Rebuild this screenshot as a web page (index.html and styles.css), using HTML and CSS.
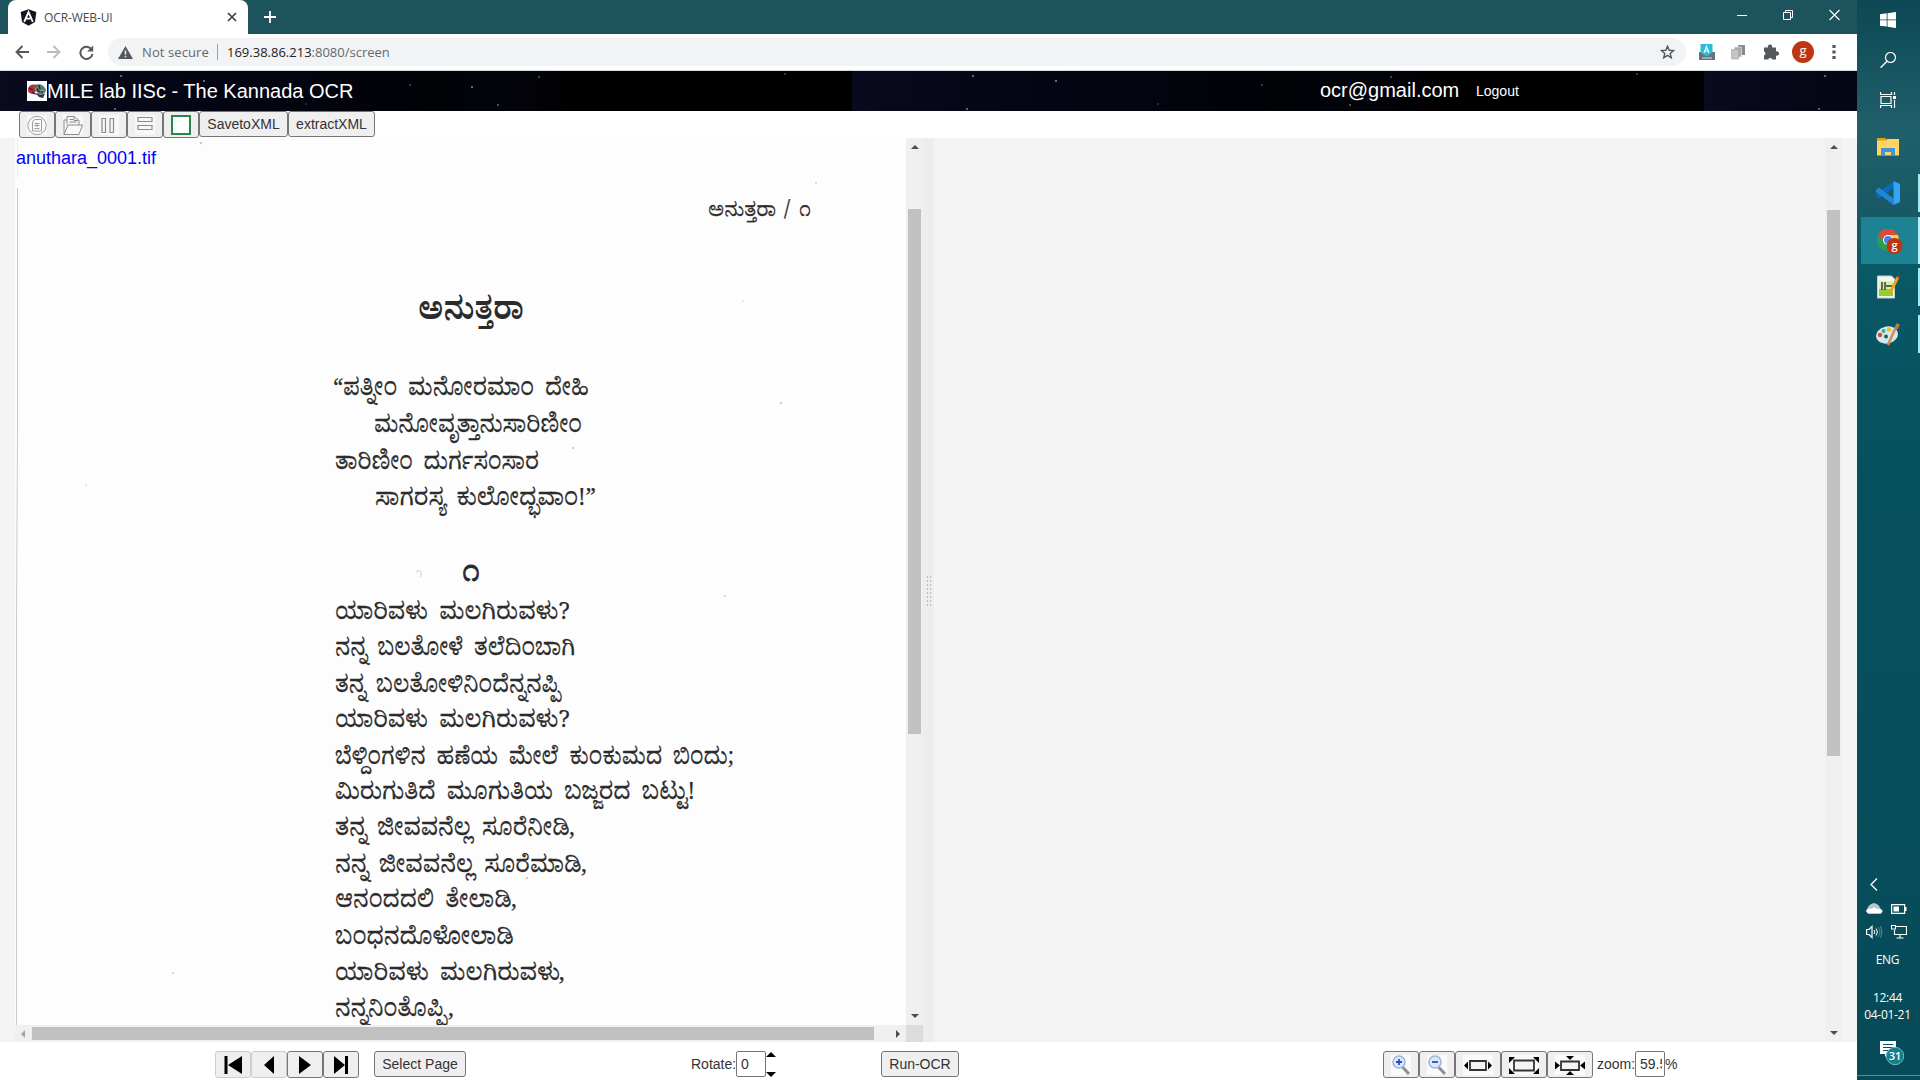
FILE: index.html
```html
<!DOCTYPE html>
<html lang="en">
<head>
<meta charset="utf-8">
<title>OCR-WEB-UI</title>
<link rel="stylesheet" href="styles.css">
</head>
<body>
<main class="browser">
  <div class="tabstrip">
    <div class="tab">
      <svg width="17" height="17" viewBox="0 0 17 17"><path d="M8.500.2 16.300 3 15 13 8.500 16.800 2 13 .7 3z" fill="#10151f"/><path d="M4.200 12.800 8.500 3l4.300 9.800M5.800 9.600h5.400" fill="none" stroke="#fff" stroke-width="1.900"/></svg>
      <span class="tab-title">OCR-WEB-UI</span>
      <svg width="10" height="10" viewBox="0 0 10 10"><path d="M1 1l8 8M9 1 1 9" stroke="#3c4043" stroke-width="1.700"/></svg>
    </div>
    <svg class="newtab" width="12" height="12" viewBox="0 0 12 12"><path d="M6 0v12M0 6h12" stroke="#fff" stroke-width="1.800"/></svg>
    <div class="winctl">
      <svg width="10" height="12" viewBox="0 0 10 12"><path d="M0 6.500h10" stroke="#fff"/></svg>
      <svg width="10" height="12" viewBox="0 0 10 12"><path d="M.5 3.500h7v7h-7zM2.500 3V1.500h7v7H8" fill="none" stroke="#fff"/></svg>
      <svg width="11" height="12" viewBox="0 0 11 12"><path d="M.5 1l10 10M10.500 1l-10 10" stroke="#fff" stroke-width="1.100"/></svg>
    </div>
  </div>
  <div class="navbar">
    <div class="nav-icons">
      <svg width="14" height="14" viewBox="0 0 14 14"><path d="M14 7H1.500M7.500 1l-6 6 6 6" fill="none" stroke="#54585c" stroke-width="1.900"/></svg>
      <svg width="14" height="14" viewBox="0 0 14 14"><path d="M0 7h12.500M6.500 1l6 6-6 6" fill="none" stroke="#b9bbbd" stroke-width="1.900"/></svg>
      <svg width="15" height="15" viewBox="0 0 15 15"><path d="M12.600 4.500A6.100 6.100 0 1 0 13.500 8.800" fill="none" stroke="#54585c" stroke-width="2"/><path d="M14.200.4v6h-6z" fill="#54585c"/></svg>
    </div>
    <div class="omnibox">
      <svg width="15" height="13" viewBox="0 0 15 13"><path d="M7.500 0 15 13H0z" fill="#54585c"/><path d="M7.500 4.500v4M7.500 9.800v1.500" stroke="#f1f3f4" stroke-width="1.500"/></svg>
      <span class="insecure">Not secure</span>
      <span class="url"><b>169.38.86.213</b>:8080/screen</span>
      <svg class="star" width="15" height="14" viewBox="0 0 15 14"><path d="M7.500 1.200 9.200 5.300l4.400.3-3.400 2.900 1.100 4.300-3.800-2.400-3.800 2.400 1.100-4.300L1.400 5.600l4.400-.3z" fill="none" stroke="#54585c" stroke-width="1.400"/></svg>
    </div>
    <div class="extensions">
      <svg width="16" height="16" viewBox="0 0 16 16"><path d="M0 8h16v8H0z" fill="#65737b"/><path d="M1.500 0h12v8.500L7.500 12.500l-6-4z" fill="#25bfd9"/><path d="M5 9 7.500 2.500 10 9M6 7h3" fill="none" stroke="#fff" stroke-width="1.200"/><path d="M3 14h10" stroke="#ddd"/></svg>
      <svg width="16" height="16" viewBox="0 0 16 16"><path d="M7 1h7v10H7z" fill="#8a8a8a"/><path d="M3.500 3h7v10h-7z" fill="#aaa" stroke="#eee" stroke-width=".6"/><path d="M.5 5.500h7v9.500h-7z" fill="#c4c4c4" stroke="#aaa" stroke-width=".7"/></svg>
      <svg width="16" height="16" viewBox="0 0 16 16"><path d="M1 3.500h4a2.200 2.200 0 1 1 4 0h4v4a2.200 2.200 0 1 1 0 4v4H9.200a2.100 2.100 0 0 0-4 0H1v-4a2.100 2.100 0 0 0 0-4z" fill="#54585c"/></svg>
      <span class="avatar">g</span>
      <svg width="4" height="14" viewBox="0 0 4 14"><path d="M2 0v14" stroke="#54585c" stroke-width="3.200" stroke-dasharray="3 2.500"/></svg>
    </div>
  </div>

  <header class="apphead">
    <svg width="20" height="20" viewBox="0 0 20 20"><path d="M0 0h20v20H0z" fill="#fff"/><path d="M1 9Q1 3 8 3.500L10 8l-3 5Q1 13 1 9z" fill="#b52f38"/><path d="M7 4q9-3 12 5-1 5-7 4L8 9z" fill="#4f7d78"/><path d="M9 12.500q5 2 9 0l-2 4.500-4-1z" fill="#27324d"/><path d="M2 7l4 2M9 5l2 5 5 1M5 11l3 2 4 0M12 4l1 4" stroke="#3a1c30" fill="none" stroke-width="1.200"/><path d="M8 9l2-3M13 10l4-1" stroke="#d7a83e"/></svg>
    <h1>MILE lab IISc - The Kannada OCR</h1>
    <span class="email">ocr@gmail.com</span>
    <a class="logout">Logout</a>
  </header>

  <div class="toolbar">
    <button class="ic dis"><svg width="20" height="20" viewBox="0 0 20 20"><path d="M0 0h20v20H0z" fill="#f8f8f8"/><g fill="none" stroke="#a0a0a0"><circle cx="10" cy="10.500" r="9.200"/><path d="M5.500 6.500 8 4.500h6.500v11.500h-9zM7.500 8.500h5M7.500 10.500h5M10 9v3M7.500 13.500h5"/></g></svg></button>
    <button class="ic dis"><svg width="20" height="20" viewBox="0 0 20 20"><path d="M0 0h20v20H0z" fill="#f8f8f8"/><g fill="none" stroke="#8c8c8c"><path d="M1 19.500V5h3M1 19.500 5 10h14.500L16 19.500zM4 9.500V1.500h7l5 4v4.500M6.500 4.500h4M6.500 7h7M11 1.500v4h4.500"/></g></svg></button>
    <button class="ic dis"><svg width="20" height="20" viewBox="0 0 20 20"><path d="M0 0h20v20H0z" fill="#f8f8f8"/><path d="M3 3.500h3.500v14H3zM11 3.500h3.500v14H11z" fill="none" stroke="#8c8c8c" stroke-width="1.200"/></svg></button>
    <button class="ic dis"><svg width="20" height="20" viewBox="0 0 20 20"><path d="M0 0h20v20H0z" fill="#f8f8f8"/><path d="M3 2.500h14v4H3zM3 10.500h14v4H3z" fill="none" stroke="#8c8c8c" stroke-width="1.200"/></svg></button>
    <button class="ic"><svg width="20" height="20" viewBox="0 0 20 20"><path d="M1 1h18v18H1z" fill="#fff" stroke="#27884a" stroke-width="2"/></svg></button>
    <button class="save">SavetoXML</button>
    <button class="extract">extractXML</button>
  </div>

  <div class="panes">
    <section class="scan-pane">
      <div class="scan-row">
        <svg class="scan" width="891" height="887" viewBox="15 138 891 887">
          <path d="M17.500 138v40" stroke="#eee"/>
          <path d="M17.500 188V430L16.500 620V1025" stroke="#c9c9c9" fill="none"/>
          <text x="16" y="164" class="fname">anuthara_0001.tif</text>
          <g class="kn">
            <text x="708" y="216" font-size="19" textLength="68" lengthAdjust="spacingAndGlyphs">ಅನುತ್ತರಾ</text>
            <text x="784" y="216" font-size="21">/</text>
            <text x="799" y="216" font-size="20" textLength="12" lengthAdjust="spacingAndGlyphs">೧</text>
            <text class="title" x="418" y="319" font-size="31" textLength="106" lengthAdjust="spacingAndGlyphs">ಅನುತ್ತರಾ</text>
            <text x="333" y="395" textLength="256" lengthAdjust="spacingAndGlyphs">“ಪತ್ನೀಂ ಮನೋರಮಾಂ ದೇಹಿ</text>
            <text x="374" y="432" textLength="208" lengthAdjust="spacingAndGlyphs">ಮನೋವೃತ್ತಾನುಸಾರಿಣೀಂ</text>
            <text x="335" y="469" textLength="204" lengthAdjust="spacingAndGlyphs">ತಾರಿಣೀಂ ದುರ್ಗಸಂಸಾರ</text>
            <text x="375" y="505" textLength="221" lengthAdjust="spacingAndGlyphs">ಸಾಗರಸ್ಯ ಕುಲೋದ್ಭವಾಂ!”</text>
            <text x="462" y="581" font-size="28" textLength="18" lengthAdjust="spacingAndGlyphs" stroke-width=".8">೧</text>
            <text x="335" y="619" textLength="235" lengthAdjust="spacingAndGlyphs">ಯಾರಿವಳು ಮಲಗಿರುವಳು?</text>
            <text x="335" y="655" textLength="240" lengthAdjust="spacingAndGlyphs">ನನ್ನ ಬಲತೋಳೆ ತಲೆದಿಂಬಾಗಿ</text>
            <text x="335" y="692" textLength="224" lengthAdjust="spacingAndGlyphs">ತನ್ನ ಬಲತೋಳಿನಿಂದೆನ್ನನಪ್ಪಿ</text>
            <text x="335" y="727" textLength="235" lengthAdjust="spacingAndGlyphs">ಯಾರಿವಳು ಮಲಗಿರುವಳು?</text>
            <text x="335" y="764" textLength="399" lengthAdjust="spacingAndGlyphs">ಬೆಳ್ದಿಂಗಳಿನ ಹಣೆಯ ಮೇಲೆ ಕುಂಕುಮದ ಬಿಂದು;</text>
            <text x="335" y="799" textLength="360" lengthAdjust="spacingAndGlyphs">ಮಿರುಗುತಿದೆ ಮೂಗುತಿಯ ಬಜ್ಜರದ ಬಟ್ಟು!</text>
            <text x="335" y="835" textLength="240" lengthAdjust="spacingAndGlyphs">ತನ್ನ ಜೀವವನೆಲ್ಲ ಸೂರೆನೀಡಿ,</text>
            <text x="335" y="872" textLength="252" lengthAdjust="spacingAndGlyphs">ನನ್ನ ಜೀವವನೆಲ್ಲ ಸೂರೆಮಾಡಿ,</text>
            <text x="335" y="907" textLength="182" lengthAdjust="spacingAndGlyphs">ಆನಂದದಲಿ ತೇಲಾಡಿ,</text>
            <text x="335" y="944" textLength="179" lengthAdjust="spacingAndGlyphs">ಬಂಧನದೊಳೋಲಾಡಿ</text>
            <text x="335" y="980" textLength="230" lengthAdjust="spacingAndGlyphs">ಯಾರಿವಳು ಮಲಗಿರುವಳು,</text>
            <text x="335" y="1016" textLength="119" lengthAdjust="spacingAndGlyphs">ನನ್ನನಿಂತೊಪ್ಪಿ,</text>
          </g>
          <g fill="#ccc"><circle cx="816" cy="183" r="1"/><circle cx="743" cy="301" r=".8"/><circle cx="781" cy="403" r="1.200"/><circle cx="573" cy="448" r="1.200"/><circle cx="527" cy="878" r="1.200"/><circle cx="173" cy="973" r="1"/><circle cx="725" cy="596" r="1"/><circle cx="201" cy="143" r="1.200"/><circle cx="86" cy="485" r=".8"/></g>
          <path d="M416 572q4-3 5 0v5" stroke="#ccc" fill="none"/>
        </svg>
        <div class="vbar"><i class="arr up"></i><div class="vthumb left"></div><i class="arr down"></i></div>
      </div>
      <div class="hrow">
        <div class="hbar"><i class="arr lt"></i><div class="hthumb"></div><i class="arr rt"></i></div>
        <div class="corner"></div>
      </div>
    </section>
    <div class="splitter"><div class="grip"></div></div>
    <section class="text-pane">
      <div class="vbar"><i class="arr up"></i><div class="vthumb right"></div><i class="arr down"></i></div>
    </section>
  </div>

  <footer class="bottombar">
    <div class="group pager">
      <button class="ic off"><svg width="20" height="20" viewBox="0 0 20 20"><path d="M1.500 1h3v18h-3zM19 1v18L5 10z"/></svg></button>
      <button class="ic off"><svg width="20" height="20" viewBox="0 0 20 20"><path d="M15 1v18L5 10z"/></svg></button>
      <button class="ic"><svg width="20" height="20" viewBox="0 0 20 20"><path d="M4 1v18l12-9z"/></svg></button>
      <button class="ic"><svg width="20" height="20" viewBox="0 0 20 20"><path d="M3 1v18l11-9zM14 1h3v18h-3z"/></svg></button>
    </div>
    <button class="select">Select Page</button>
    <div class="group rotate"><span>Rotate:</span><span class="field">0</span><span class="spin"><i class="s-up"></i><i class="s-down"></i></span></div>
    <button class="run">Run-OCR</button>
    <div class="group zooms">
      <button class="ic"><svg width="20" height="20" viewBox="0 0 20 20"><path d="M0 0h20v20H0z" fill="#fafafa"/><path d="M11.500 12 18 19" stroke="#8f8f8f" stroke-width="3"/><circle cx="8" cy="7" r="6" fill="#dce9fb" stroke="#9fb4d8" stroke-width="1.500"/><path d="M8 4v6M5 7h6" stroke="#2a50c8" stroke-width="1.800"/></svg></button>
      <button class="ic"><svg width="20" height="20" viewBox="0 0 20 20"><path d="M0 0h20v20H0z" fill="#fafafa"/><path d="M11.500 12 18 19" stroke="#8f8f8f" stroke-width="3"/><circle cx="8" cy="7" r="6" fill="#dce9fb" stroke="#9fb4d8" stroke-width="1.500"/><path d="M5 7h6" stroke="#2a50c8" stroke-width="1.800"/></svg></button>
      <button class="ic wide"><svg width="30" height="20" viewBox="0 0 30 20"><path d="M0 0h30v20H0z" fill="#fafafa"/><path d="M7 6h16v9H7z" fill="#f4f4f4" stroke="#333" stroke-width="1.800"/><path d="M5 6.500v8l-4-4zM25 6.500v8l4-4z"/></svg></button>
      <button class="ic wide"><svg width="30" height="20" viewBox="0 0 30 20"><path d="M0 0h30v20H0z" fill="#fafafa"/><path d="M5 5.500h20v10H5z" fill="#f4f4f4" stroke="#333" stroke-width="1.800"/><path d="M0 2h6L0 8zM30 2h-6l6 6zM0 19h6l-6-6zM30 19h-6l6-6z"/></svg></button>
      <button class="ic wide"><svg width="30" height="20" viewBox="0 0 30 20"><path d="M0 0h30v20H0z" fill="#fafafa"/><path d="M6 6.500h18v8.500H6z" fill="#f4f4f4" stroke="#333" stroke-width="1.800"/><path d="M0 6.500v8l5-4zM30 6.500v8l-5-4zM11 1h8l-4 4zM11 20h8l-4-4z"/></svg></button>
      <span class="zlabel">zoom:</span><span class="field"><span class="clip">59.5</span></span><span class="pct">%</span>
    </div>
  </footer>
</main>

<aside class="taskbar">
  <div class="task"><svg width="16" height="16" viewBox="0 0 16 16"><path d="M0 2.200 6.700 1.300v6.200H0zM7.500 1.200 16 0v7.500H7.500zM0 8.300h6.700v6.300L0 13.700zM7.500 8.300H16V16l-8.500-1.200z" fill="#fff"/></svg></div>
  <div class="task"><svg width="16" height="16" viewBox="0 0 16 16"><circle cx="10.500" cy="5.500" r="5" fill="none" stroke="#fff" stroke-width="1.200"/><path d="M7 9.200.5 15.700" stroke="#fff" stroke-width="1.400"/></svg></div>
  <div class="task"><svg width="17" height="16" viewBox="0 0 17 16"><path d="M.5 0v2.500h11V0M1 4.500h10v7H1zM.5 16v-2.500h11V16M14.500 0v3M14.500 8v8" fill="none" stroke="#fff" stroke-width="1.200"/><path d="M13 4h3v3h-3z" fill="#fff"/></svg></div>
  <div class="task app"><svg width="22" height="18" viewBox="0 0 22 18"><path d="M0 0h9v3H0z" fill="#e39b0e"/><path d="M0 2.500h9L10 1h12v16.500H0z" fill="#ffd462"/><path d="M4 18v-8h14v8h-4v-4H8v4z" fill="#3e95dc"/></svg></div>
  <div class="task app open"><svg width="24" height="24" viewBox="0 0 24 24"><path d="M17.500 0v7L3 17.500 0 15v-2z" fill="#0a6cb8"/><path d="M0 9l3-2.500L17.500 17.500V24L0 11z" fill="#1f87d4"/><path d="M17.500 0 24 3v18l-6.500 3z" fill="#34a5f4"/></svg></div>
  <div class="task app open active"><svg width="26" height="26" viewBox="0 0 26 26"><circle cx="11" cy="11" r="11" fill="#2c9d53"/><path d="M1.500 5.500A11 11 0 0 1 20.500 5.500L11 11z" fill="#dd4b3e"/><path d="M11 22 15 11 11 6h9.800A11 11 0 0 1 11 22z" fill="#fbd045"/><path d="M1.500 5.500 7 13l4-7h9.800A11 11 0 0 0 1.500 5.500z" fill="#dd4b3e"/><circle cx="11" cy="11" r="5" fill="#fff"/><circle cx="11" cy="11" r="4" fill="#4285f0"/><circle cx="17.500" cy="17" r="8" fill="#bd3512"/><text x="17.500" y="20" class="badge">g</text></svg></div>
  <div class="task app open"><svg width="24" height="24" viewBox="0 0 24 24"><path d="M1.500 1h14l3 3v19h-17z" fill="#f5f7f0" stroke="#ccc"/><path d="M3 9h14v12H3z" fill="#8fd02c"/><path d="M3 6h14v8H3z" fill="#d9f0a5"/><path d="M6 7v8M9 7v8M10 11h6" stroke="#333" stroke-width="1.400"/><path d="M22 2 14 18" stroke="#e8a51f" stroke-width="3"/><path d="m21.500 1 2 1.500" stroke="#a33" stroke-width="2.500"/></svg></div>
  <div class="task app open"><svg width="24" height="24" viewBox="0 0 24 24"><ellipse cx="11" cy="13" rx="11" ry="8.500" fill="#d5e9f5" transform="rotate(-12 11 13)"/><circle cx="4" cy="13" r="2.300" fill="#db493d"/><circle cx="7.500" cy="9" r="2" fill="#4cae50"/><circle cx="13" cy="7.500" r="2.300" fill="#f2b92e"/><circle cx="10" cy="14.500" r="2" fill="#17606c"/><path d="m12 23 7-16" stroke="#d48e4d" stroke-width="2.600"/><path d="m18 6 3-5 3 2-3 5z" fill="#c27a40"/></svg></div>
  <div class="tray">
    <svg class="chev" width="8" height="13" viewBox="0 0 8 13"><path d="M7 .5 1 6.500l6 6" fill="none" stroke="#fff" stroke-width="1.300"/></svg>
    <div class="pair">
      <svg width="17" height="11" viewBox="0 0 17 11"><path d="M1 6Q3 1 8 0q5 1 6 5l3 3-2 2.500H2L0 8z" fill="#b5c9cd"/><path d="M0 8q2-3 5-2 3-3 6 0 5-1 5 3l-1 1.500H2z" fill="#fff"/></svg>
      <svg width="16" height="10" viewBox="0 0 16 10"><path d="M.6.600h13v8.800H.6z" fill="none" stroke="#fff" stroke-width="1.200"/><path d="M2.500 2.500H8v5H2.500zM14 3h1.500v4H14z" fill="#fff"/></svg>
    </div>
    <div class="pair">
      <svg width="17" height="14" viewBox="0 0 17 14"><path d="M.6 4.500H3l3-3v11l-3-3H.6z" fill="none" stroke="#fff" stroke-width="1.200"/><path d="M8 5q1.500 2 0 4M10 3.500q3 3.500 0 7" fill="none" stroke="#fff"/><path d="M12 2q4 5 0 10M14.500 1q3 6 0 12" fill="none" stroke="#5c8790"/></svg>
      <svg width="16" height="14" viewBox="0 0 16 14"><path d="M5 1.500h10.500v8H3.500V5M9 10v3M5.500 13h7M.5.500h4v3.500h-4z" fill="none" stroke="#fff" stroke-width="1.100"/></svg>
    </div>
    <div class="lang">ENG</div>
    <div class="clock">12:44<br>04-01-21</div>
    <svg class="notif" width="26" height="26" viewBox="0 0 26 26"><path d="M1 1h16v13H9l-3 3v-3H1z" fill="#fff"/><path d="M4 4.500h10M4 7.500h10M4 10.500h7" stroke="#0a4c5a" stroke-width="1.200"/><circle cx="16" cy="16" r="8.700" fill="#137f8e" stroke="#79b8c0"/><text x="16" y="20" class="badge">31</text></svg>
  </div>
</aside>
</body>
</html>
```
FILE: styles.css
```css
* { box-sizing: border-box; }
body { margin: 0; width: 1920px; height: 1080px; overflow: hidden; display: flex; font-family: "Liberation Sans", Arial, sans-serif; color: #333; background: #fff; }
svg { display: block; flex: none; }
.browser { width: 1857px; display: flex; flex-direction: column; }

.tabstrip { height: 34px; background: #1c535d; display: flex; align-items: center; font-family: "Open Sans", "Noto Sans", sans-serif; }
.tab { width: 240px; height: 34px; margin-left: 8px; background: #fff; border-radius: 8px 8px 0 0; display: flex; align-items: center; padding: 0 11px 0 12px; }
.tab-title { font-size: 12px; letter-spacing: -0.1px; margin-left: 7px; flex: 1; color: #45494d; }
.newtab { margin-left: 16px; }
.winctl { margin-left: auto; display: flex; gap: 36px; padding: 0 17px 5px 0; }

.navbar { height: 37px; border-bottom: 1px solid #d5dcde; display: flex; align-items: center; background: #fff; font-family: "Open Sans", "Noto Sans", sans-serif; }
.nav-icons { width: 108px; padding-left: 15px; display: flex; gap: 18px; }
.omnibox { width: 1578px; height: 28px; border-radius: 14px; background: #f1f3f4; display: flex; align-items: center; padding: 0 11px 0 10px; font-size: 13px; color: #65696d; }
.insecure { margin-left: 9px; width: 75px; letter-spacing: 0.1px; }
.url { border-left: 1px solid #9aa0a6; padding-left: 9px; line-height: 16px; letter-spacing: 0; }
.url b { font-weight: 400; color: #222; }
.star { margin-left: auto; }
.extensions { display: flex; align-items: center; padding-left: 13px; gap: 16px; }
.avatar { width: 22px; height: 22px; border-radius: 50%; background: #bd3512; color: #fff; font-size: 13px; line-height: 19px; text-align: center; margin-left: -3px; }
.avatar + svg { margin-left: 2px; }

.apphead { height: 40px; display: flex; align-items: center; padding-left: 27px; color: #fff;
  background:
    radial-gradient(circle at 121px 5px, #666 0 1px, transparent 1.6px),
    radial-gradient(circle at 204px 10px, #888 0 .6px, transparent 1.1px),
    radial-gradient(circle at 115px 38px, #777 0 .6px, transparent 1.1px),
    radial-gradient(circle at 410px 14px, #445 0 .6px, transparent 1.1px),
    radial-gradient(circle at 472px 16px, #888 0 .6px, transparent 1.1px),
    radial-gradient(circle at 539px 6px, #555 0 .6px, transparent 1.1px),
    radial-gradient(circle at 498px 34px, #666 0 .6px, transparent 1.1px),
    radial-gradient(circle at 785px 3px, #444 0 .6px, transparent 1.1px),
    radial-gradient(circle at 306px 33px, #334 0 .6px, transparent 1.1px),
    linear-gradient(90deg, #090a1d, #040615 150px, #03040e 300px, #010206 420px, #03040b 510px, #000 590px, #000);
  background-size: 852px 40px; }
h1 { margin: 0; width: 1273px; font-size: 20px; font-weight: 400; line-height: 40px; }
.email { font-size: 20px; width: 156px; line-height: 36px; height: 38px; }
.logout { font-size: 14px; }

button { font: 14px "Liberation Sans", Arial, sans-serif; color: #333; background: #efefef; border: 1px solid #767676; border-radius: 3px; height: 26px; padding: 0; }
button.ic { width: 36px; height: 27px; display: flex; align-items: center; justify-content: center; }
button.wide { width: 46px; }
button.off { border-color: #ccc; }
.toolbar { height: 27px; padding-left: 19px; display: flex; }
.toolbar .ic { padding-top: 1px; }
.save { width: 89px; }
.extract { width: 87px; }

.panes { height: 904px; display: flex; background: #f4f4f4; }
.scan-pane { width: 923px; padding-left: 15px; display: flex; flex-direction: column; }
.scan-row, .hrow { display: flex; }
.scan { background: #fdfdfd; }
.fname { font-size: 18px; fill: #00f; }
.kn { font-family: "Noto Serif Kannada", "Noto Sans Kannada", "Noto Sans", serif; font-size: 24px; fill: #2b2b2b; word-spacing: 6px; stroke: #2b2b2b; stroke-width: .25; }
.title { font-weight: 700; stroke: none; }
.vbar { width: 17px; background: #f0f0f0; display: flex; flex-direction: column; align-items: center; }
.arr { border: 4px solid transparent; }
.up { border-top: 0; border-bottom: 4px solid #4d4d4d; margin-top: 7px; }
.down { border-bottom: 0; border-top: 4px solid #4d4d4d; margin: auto 0 7px; }
.vthumb { width: 13px; background: #c1c1c1; }
.vthumb.left { height: 525px; margin-top: 60px; }
.vthumb.right { height: 546px; margin-top: 61px; }
.hbar { width: 891px; height: 17px; background: #f0f0f0; display: flex; align-items: center; }
.hthumb { width: 842px; height: 13px; background: #c1c1c1; }
.lt { border-left: 0; border-right: 4px solid #a3a3a3; margin: 0 7px 0 6px; }
.rt { border-right: 0; border-left: 4px solid #4d4d4d; margin-left: auto; margin-right: 6px; }
.corner { width: 17px; height: 17px; background: #dcdcdc; }
.splitter { width: 11px; background: #ededed; display: flex; align-items: center; justify-content: center; }
.grip { width: 6px; height: 31px; background: radial-gradient(circle, #bbb 0 .8px, transparent 1.1px) 0 0 / 3px 4px; }
.text-pane { width: 923px; padding-right: 15px; display: flex; justify-content: flex-end; }

.bottombar { height: 38px; padding: 9px 0 0 215px; display: flex; font-size: 14px; }
.group { display: flex; }
.select { width: 92px; margin-left: 15px; }
.rotate { margin-left: 225px; line-height: 26px; width: 190px; }
.rotate > span:first-child { width: 45px; }
.field { width: 30px; height: 26px; border: 1px solid #767676; border-radius: 2px; padding-left: 4px; line-height: 24px; }
.clip { display: block; width: 22px; overflow: hidden; white-space: nowrap; }
.spin { width: 10px; display: flex; flex-direction: column; justify-content: space-between; height: 26px; padding-top: 1px; }
.spin i { border: 5px solid transparent; }
.spin .s-up { border-top: 0; border-bottom-color: #000; }
.spin .s-down { border-bottom: 0; border-top-color: #000; }
.run { width: 78px; }
.zooms { margin-left: 424px; line-height: 26px; }
.zlabel { width: 38px; margin-left: 4px; }
.pct { margin-left: 0; }

.taskbar { width: 63px; height: 1080px; display: flex; flex-direction: column; color: #fff; font-family: "Open Sans", "Noto Sans", sans-serif; background: linear-gradient(#0d4854, #20606a 130px, #1a5a65 200px, #0a5967 260px, #06525f 420px, #074a58 100%); }
.task { height: 40px; display: flex; align-items: center; justify-content: center; padding-right: 1px; }
.task.app { height: 47px; }
.task.app:nth-child(4) { height: 50px; padding-top: 3px; }
.task.app:nth-child(5), .task.app:nth-child(8) { padding: 0 0 2px 1px; }
.task.app:nth-child(7) { padding: 0 0 1px; }
.task.open { border-right: 2px solid transparent; border-image: linear-gradient(transparent 4px, #a3eaf0 4px 42px, transparent 42px) 0 2 0 0; }
.task.active { margin-left: 4px; background: #1d8292; padding: 2px 0 0; border-image: none; border-right-color: #b3f2f7; }
.badge { fill: #fff; font-size: 11px; font-weight: 600; text-anchor: middle; }
.tray { margin-top: auto; height: 202px; display: flex; flex-direction: column; font-size: 12px; background: linear-gradient(#5b8c95, #5b8c95) 0 197px / 63px 1px no-repeat; }
.chev { margin-left: 13px; }
.pair { display: flex; gap: 8px; padding-left: 9px; margin-top: 12px; align-items: center; }
.pair + .pair { margin-top: 11px; }
.lang, .clock { text-align: center; letter-spacing: -0.3px; line-height: 17px; padding-right: 2px; }
.lang { margin-top: 12px; font-size: 12px; }
.clock { margin-top: 21px; }
.notif { margin: 17px 0 0 22px; }
```
